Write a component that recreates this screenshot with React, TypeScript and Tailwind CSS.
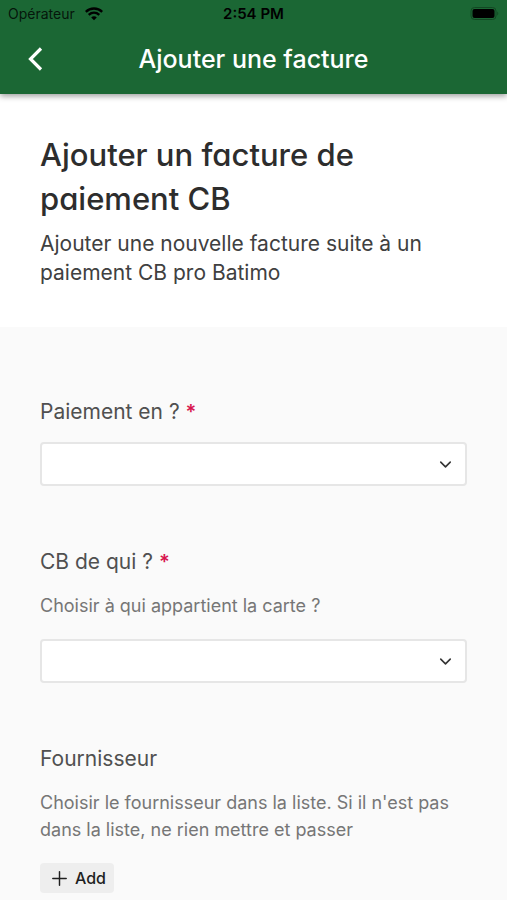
import { ChevronDown, Plus } from "lucide-react";

function StatusBar() {
  return (
    <div className="grid h-7 grid-cols-3 items-center px-2 text-black">
      <div className="flex items-center gap-2.5 text-sm leading-5 text-black/80">
        <span>Opérateur</span>
        <svg className="text-black" width="18" height="14" viewBox="0 0 18 14" fill="none" stroke="currentColor" aria-label="Wi-Fi">
          <path d="M0.800 4.800C5.300 0.300 12.700 0.300 17.200 4.800" strokeWidth="2.400" />
          <path d="M3.700 7.900C6.800 5 11.200 5 14.300 7.900" strokeWidth="2.300" />
          <path d="M9 13.200L6.200 10.400C7.800 8.900 10.200 8.900 11.800 10.400Z" fill="currentColor" stroke="none" />
        </svg>
      </div>
      <span className="text-center text-[15px] leading-5 font-semibold">2:54 PM</span>
      <svg className="justify-self-end" width="30" height="14" viewBox="0 0 30 14" aria-label="Batterie">
        <rect x="2" y="0.500" width="25" height="12" rx="3.500" fill="none" stroke="#124823" />
        <rect x="3.500" y="2" width="22" height="9" rx="2" fill="#000" />
        <path d="M28.300 4.500v4c1.300-.5 1.300-3.500 0-4z" fill="#124823" />
      </svg>
    </div>
  );
}

function Header() {
  return (
    <header className="relative bg-[#1b6734] pb-1 shadow-[0_2px_6px_rgba(0,0,0,0.4)]">
      <StatusBar />
      <div className="grid h-[62px] grid-cols-[40px_1fr_40px] items-center px-4">
        <button type="button" aria-label="Retour" className="flex h-10 items-center justify-center text-white">
          <svg width="16" height="26" viewBox="0 0 16 26" fill="none" stroke="currentColor" strokeWidth="3.200">
            <path d="M13 2.500L2.500 13l10.500 10.500" />
          </svg>
        </button>
        <h2 className="text-center text-[25px] leading-8 font-medium text-white">Ajouter une facture</h2>
      </div>
    </header>
  );
}

function Required() {
  return <span className="text-xl leading-5 font-semibold text-[#d8164f]">*</span>;
}

function SelectBox({ id }: { id: string }) {
  return (
    <div className="grid items-center">
      <select
        id={id}
        defaultValue=""
        className="col-start-1 row-start-1 h-11 w-full appearance-none rounded-sm border-2 border-[#e6e6e6] bg-white px-3 text-lg"
      >
        <option value="" />
      </select>
      <ChevronDown
        className="pointer-events-none col-start-1 row-start-1 mr-3 justify-self-end text-[#333333]"
        size={19}
        strokeWidth={2}
      />
    </div>
  );
}

const labelClass = "block text-[21px] leading-7 text-[#505050]";
const helpClass = "mt-4 mb-5 text-lg leading-[27px] text-[#767676]";

export default function App() {
  return (
    <div className="min-h-screen bg-[#fafafa] font-['Inter','Liberation_Sans',sans-serif]">
      <Header />
      <section className="bg-white px-10 pt-[39px] pb-10">
        <h1 className="text-[31px] leading-[44px] font-medium text-[#2d2d2d] [font-feature-settings:'cv11']">
          Ajouter un facture de paiement CB
        </h1>
        <p className="mt-2 text-[21px] leading-[29px] text-[#404040]">
          Ajouter une nouvelle facture suite à un paiement CB pro Batimo
        </p>
      </section>
      <form className="flex flex-col gap-[62px] px-10 pt-[71px] pb-1">
        <div>
          <label htmlFor="paiement" className={labelClass}>
            Paiement en ? <Required />
          </label>
          <div className="mt-4">
            <SelectBox id="paiement" />
          </div>
        </div>
        <div>
          <label htmlFor="carte" className={labelClass}>
            CB de qui ? <Required />
          </label>
          <p className={helpClass}>Choisir à qui appartient la carte ?</p>
          <SelectBox id="carte" />
        </div>
        <div>
          <h3 className={labelClass}>Fournisseur</h3>
          <p className={helpClass}>
            Choisir le fournisseur dans la liste. Si il n'est pas dans la liste, ne rien mettre et passer
          </p>
          <button
            type="button"
            className="flex h-[30px] items-center gap-1 rounded-sm bg-[#eeeeee] px-2 text-base leading-5 font-medium text-[#1f1f1f]"
          >
            <Plus size={23} strokeWidth={1.5} />
            Add
          </button>
        </div>
      </form>
    </div>
  );
}
